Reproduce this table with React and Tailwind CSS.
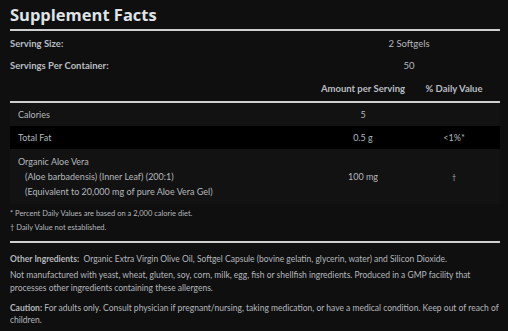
const font = { fontFamily: "Lato, 'Open Sans', sans-serif" };

function ServingRow({ label, value, className = "" }) {
  return (
    <div className={`flex items-center h-[22px] ${className}`}>
      <div className="flex-1 font-bold text-[#b9bdc2]">{label}</div>
      <div className="w-[182px] text-center">{value}</div>
    </div>
  );
}

function NutrientRow({ children, amount, dv, dark }) {
  return (
    <div className={`flex items-center ${dark ? "bg-black" : "bg-[#121212]"}`}>
      <div className="flex-1 pl-[8px]">{children}</div>
      <div className="w-[90px] text-center">{amount}</div>
      <div className="w-[92px] text-center">{dv}</div>
    </div>
  );
}

export default function App() {
  return (
    <div
      className="w-[508px] h-[331px] bg-[#0f0f0f] text-[#b4b8bd] pl-[10px] pr-[8px] overflow-hidden"
      style={font}
    >
      <h1
        className="text-[16.5px] font-bold text-[#dfe3e8] leading-[22px] pt-[4px] pb-[3px]"
        style={{ fontFamily: "'Open Sans', sans-serif" }}
      >
        Supplement Facts
      </h1>
      <div className="h-[2px] bg-[#cfcfcf]" />

      <div className="text-[9.5px] pt-[2px]">
        <ServingRow label="Serving Size:" value="2 Softgels" />
        <ServingRow label="Servings Per Container:" value="50" />
        <div className="flex items-center h-[24px] font-bold text-[#b9bdc2]">
          <div className="flex-1" />
          <div className="w-[90px] text-center whitespace-nowrap">Amount per Serving</div>
          <div className="w-[92px] text-center whitespace-nowrap">% Daily Value</div>
        </div>
      </div>
      <div className="h-[2px] bg-[#cfcfcf]" />

      <div className="text-[9px]">
        <NutrientRow amount="5">
          <div className="h-[23px] flex items-center">Calories</div>
        </NutrientRow>
        <NutrientRow amount="0.5 g" dv="<1%*" dark>
          <div className="h-[23px] flex items-center">Total Fat</div>
        </NutrientRow>
        <NutrientRow amount="100 mg" dv={<span className="text-[7px]">†</span>}>
          <div className="pt-[5px] pb-[5px] leading-[15px]">
            <div>Organic Aloe Vera</div>
            <div className="pl-[7px]">(Aloe barbadensis) (Inner Leaf) (200:1)</div>
            <div className="pl-[7px]">(Equivalent to 20,000 mg of pure Aloe Vera Gel)</div>
          </div>
        </NutrientRow>
      </div>

      <div className="text-[7.5px] leading-[14px] pt-[3px] pb-[6px]">
        <p>* Percent Daily Values are based on a 2,000 calorie diet.</p>
        <p>† Daily Value not established.</p>
      </div>
      <div className="h-[2px] bg-[#cfcfcf]" />

      <div className="text-[8.5px] leading-[13px] pt-[10px]">
        <p>
          <span className="font-bold">Other Ingredients:</span>&nbsp; Organic Extra Virgin Olive Oil, Softgel
          Capsule (bovine gelatin, glycerin, water) and Silicon Dioxide.
        </p>
        <p className="mt-[3px]">
          Not manufactured with yeast, wheat, gluten, soy, corn, milk, egg, fish or shellfish ingredients.
          Produced in a GMP facility that processes other ingredients containing these allergens.
        </p>
        <p className="mt-[7px] leading-[12px]">
          <span className="font-bold">Caution:</span> For adults only. Consult physician if
          pregnant/nursing, taking medication, or have a medical condition. Keep out of reach of children.
        </p>
      </div>
    </div>
  );
}
